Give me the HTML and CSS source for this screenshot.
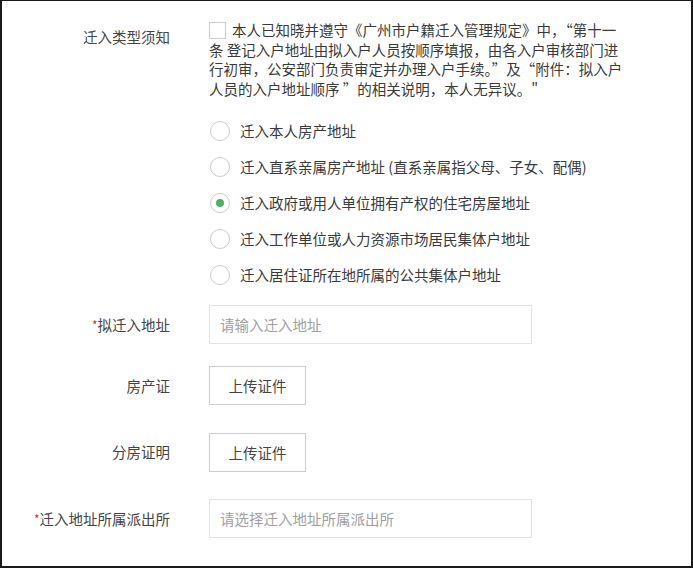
FILE: index.html
```html
<!DOCTYPE html>
<html lang="zh-CN">
<head>
    <meta charset="UTF-8">
    <meta name="viewport" content="width=device-width, initial-scale=1.0">
    <title>迁入地址</title>
    <link rel="stylesheet" href="styles.css">
</head>
<body>
    <div class="frame">
        <div class="form">
            <div class="row notice-row">
                <div class="label">迁入类型须知</div>
                <div class="field">
                    <p class="notice"><span class="checkbox"></span>本人已知晓并遵守《广州市户籍迁入管理规定》中，“第十一<br>条 登记入户地址由拟入户人员按顺序填报，由各入户审核部门进<br>行初审，公安部门负责审定并办理入户手续。”及“附件：拟入户<br>人员的入户地址顺序 ”的相关说明，本人无异议。"</p>
                    <ul class="radios">
                        <li><span class="radio"></span>迁入本人房产地址</li>
                        <li><span class="radio"></span>迁入直系亲属房产地址 (直系亲属指父母、子女、配偶)</li>
                        <li><span class="radio checked"></span>迁入政府或用人单位拥有产权的住宅房屋地址</li>
                        <li><span class="radio"></span>迁入工作单位或人力资源市场居民集体户地址</li>
                        <li><span class="radio"></span>迁入居住证所在地所属的公共集体户地址</li>
                    </ul>
                </div>
            </div>
            <div class="row">
                <div class="label"><span class="req">*</span>拟迁入地址</div>
                <div class="field"><input type="text" class="text-input" placeholder="请输入迁入地址"></div>
            </div>
            <div class="row upload-row">
                <div class="label">房产证</div>
                <div class="field"><button class="upload">上传证件</button></div>
            </div>
            <div class="row upload-row">
                <div class="label">分房证明</div>
                <div class="field"><button class="upload">上传证件</button></div>
            </div>
            <div class="row">
                <div class="label"><span class="req">*</span>迁入地址所属派出所</div>
                <div class="field"><input type="text" class="text-input" placeholder="请选择迁入地址所属派出所"></div>
            </div>
        </div>
    </div>
</body>
</html>
```

FILE: styles.css
```css
html, body {
    margin: 0;
    padding: 0;
}
body {
    font-family: "Noto Sans CJK SC", "Noto Sans", sans-serif;
    font-size: 14.5px;
    line-height: 20px;
    color: #3a3a3a;
    background: #fff;
}
.frame {
    box-sizing: border-box;
    width: 693px;
    height: 568px;
    border: 2px solid #1a1a1a;
    border-top-width: 1px;
    overflow: hidden;
}
.form {
    padding-top: 19px;
}
.row {
    display: flex;
    align-items: center;
    margin-bottom: 22px;
}
.upload-row {
    margin-bottom: 27.5px;
}
.notice-row {
    align-items: flex-start;
    margin-bottom: 12px;
}
.label {
    width: 168px;
    padding-right: 39px;
    text-align: right;
    color: #444;
    flex-shrink: 0;
}
.notice-row .label {
    padding-top: 7px;
}
.req {
    color: #c0392b;
    font-size: 12px;
    vertical-align: top;
}
.field {
    flex: 1;
}
.notice {
    margin: 0;
    width: 450px;
    line-height: 19.5px;
    white-space: nowrap;
}
.checkbox {
    display: inline-block;
    width: 15px;
    height: 15px;
    border: 1px solid #ccc;
    margin-right: 6px;
    vertical-align: -3px;
}
.radios {
    list-style: none;
    margin: 15px 0 0;
    padding: 0;
}
.radios li {
    display: flex;
    align-items: center;
    height: 36px;
}
.radio {
    box-sizing: border-box;
    width: 20px;
    height: 20px;
    border: 1px solid #ccc;
    border-radius: 50%;
    margin-left: 1px;
    margin-right: 10px;
    display: flex;
    align-items: center;
    justify-content: center;
}
.radio.checked::after {
    content: "";
    width: 8px;
    height: 8px;
    border-radius: 50%;
    background: #4cae6a;
}
.text-input {
    box-sizing: border-box;
    width: 323px;
    height: 39px;
    border: 1px solid #e3e3e3;
    padding: 0 10px;
    font-family: inherit;
    font-size: 14.5px;
    color: #333;
    outline: none;
}
.text-input::placeholder {
    color: #a0a0a0;
}
.upload {
    box-sizing: border-box;
    width: 97px;
    height: 39px;
    border: 1px solid #ccc;
    background: #fff;
    font-family: inherit;
    font-size: 14.5px;
    color: #444;
}
```
